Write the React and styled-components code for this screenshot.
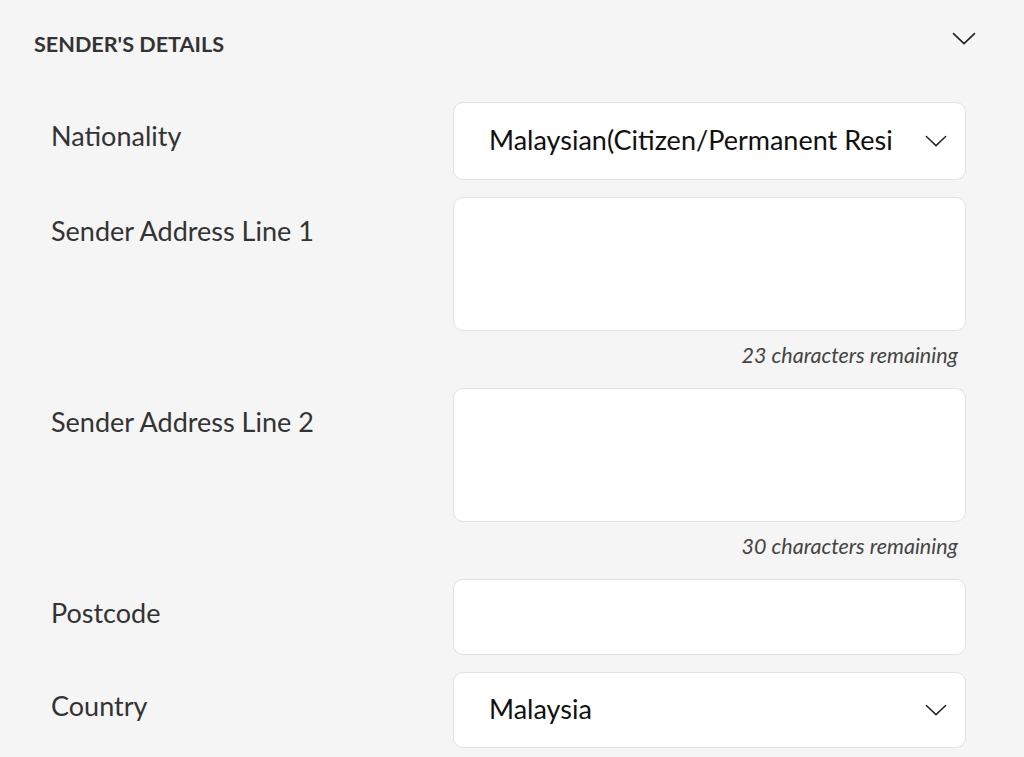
import styled, { createGlobalStyle } from 'styled-components'

const GlobalStyle = createGlobalStyle`
  html, body {
    margin: 0;
    padding: 0;
    background: #f5f5f5;
  }
  body {
    font-family: Lato, "Open Sans", sans-serif;
    color: #333;
  }
`

const Section = styled.section`
  width: 1024px;
  height: 757px;
  overflow: hidden;
  box-sizing: border-box;
  padding: 24px 48px 0 34px;
`

const Header = styled.div`
  display: flex;
  align-items: flex-start;
  justify-content: space-between;
  height: 38px;
`

const Title = styled.h2`
  margin: 0;
  padding-top: 7px;
  font-size: 21.6px;
  line-height: 26px;
  font-weight: 700;
  color: #333;
  text-transform: uppercase;
`

const HeaderToggle = styled.span`
  display: flex;
  padding-top: 8px;
`

const Form = styled.div`
  display: flex;
  flex-direction: column;
  gap: 17px;
  margin-top: 40px;
  padding-left: 17px;
`

const Row = styled.div`
  display: grid;
  grid-template-columns: 402px 513px;
  align-items: start;
`

const Label = styled.label`
  padding-top: 18px;
  font-size: 27px;
  line-height: 32px;
  color: #333;
`

const Field = styled.div`
  display: flex;
  flex-direction: column;
`

const Box = styled.div`
  display: flex;
  align-items: center;
  box-sizing: border-box;
  height: ${(p) => p.$h}px;
  padding: 0 18px 0 35px;
  background: #fff;
  border: 1px solid #e2e2e2;
  border-radius: 10px;
`

const Value = styled.span`
  flex: 1;
  overflow: hidden;
  white-space: nowrap;
  margin-right: 32px;
  padding-bottom: 3px;
  font-size: 27px;
  line-height: 32px;
  color: #111;
`

const Helper = styled.div`
  height: 32px;
  margin-top: 8px;
  padding-right: 8px;
  display: flex;
  align-items: center;
  justify-content: flex-end;
  font-size: 21.5px;
  font-style: italic;
  color: #444;
`

const Chevron = ({ size = 24 }) => (
  <svg width={size} height={size * 0.55} viewBox="0 0 24 13" fill="none">
    <path d="M1.5 1.5 L12 11.5 L22.5 1.5" stroke="#222" strokeWidth="1.6" strokeLinecap="round" strokeLinejoin="round" />
  </svg>
)

const fields = [
  { label: 'Nationality', h: 78, value: 'Malaysian(Citizen/Permanent Resident)', select: true },
  { label: 'Sender Address Line 1', h: 134, helper: '23 characters remaining' },
  { label: 'Sender Address Line 2', h: 134, helper: '30 characters remaining' },
  { label: 'Postcode', h: 76 },
  { label: 'Country', h: 76, value: 'Malaysia', select: true },
]

export default function App() {
  return (
    <>
      <GlobalStyle />
      <Section>
        <Header>
          <Title>Sender's Details</Title>
          <HeaderToggle>
            <Chevron size={24} />
          </HeaderToggle>
        </Header>
        <Form>
          {fields.map((f) => (
            <Row key={f.label}>
              <Label>{f.label}</Label>
              <Field>
                <Box $h={f.h}>
                  {f.value && <Value>{f.value}</Value>}
                  {f.select && <Chevron size={22} />}
                </Box>
                {f.helper && <Helper>{f.helper}</Helper>}
              </Field>
            </Row>
          ))}
        </Form>
      </Section>
    </>
  )
}
